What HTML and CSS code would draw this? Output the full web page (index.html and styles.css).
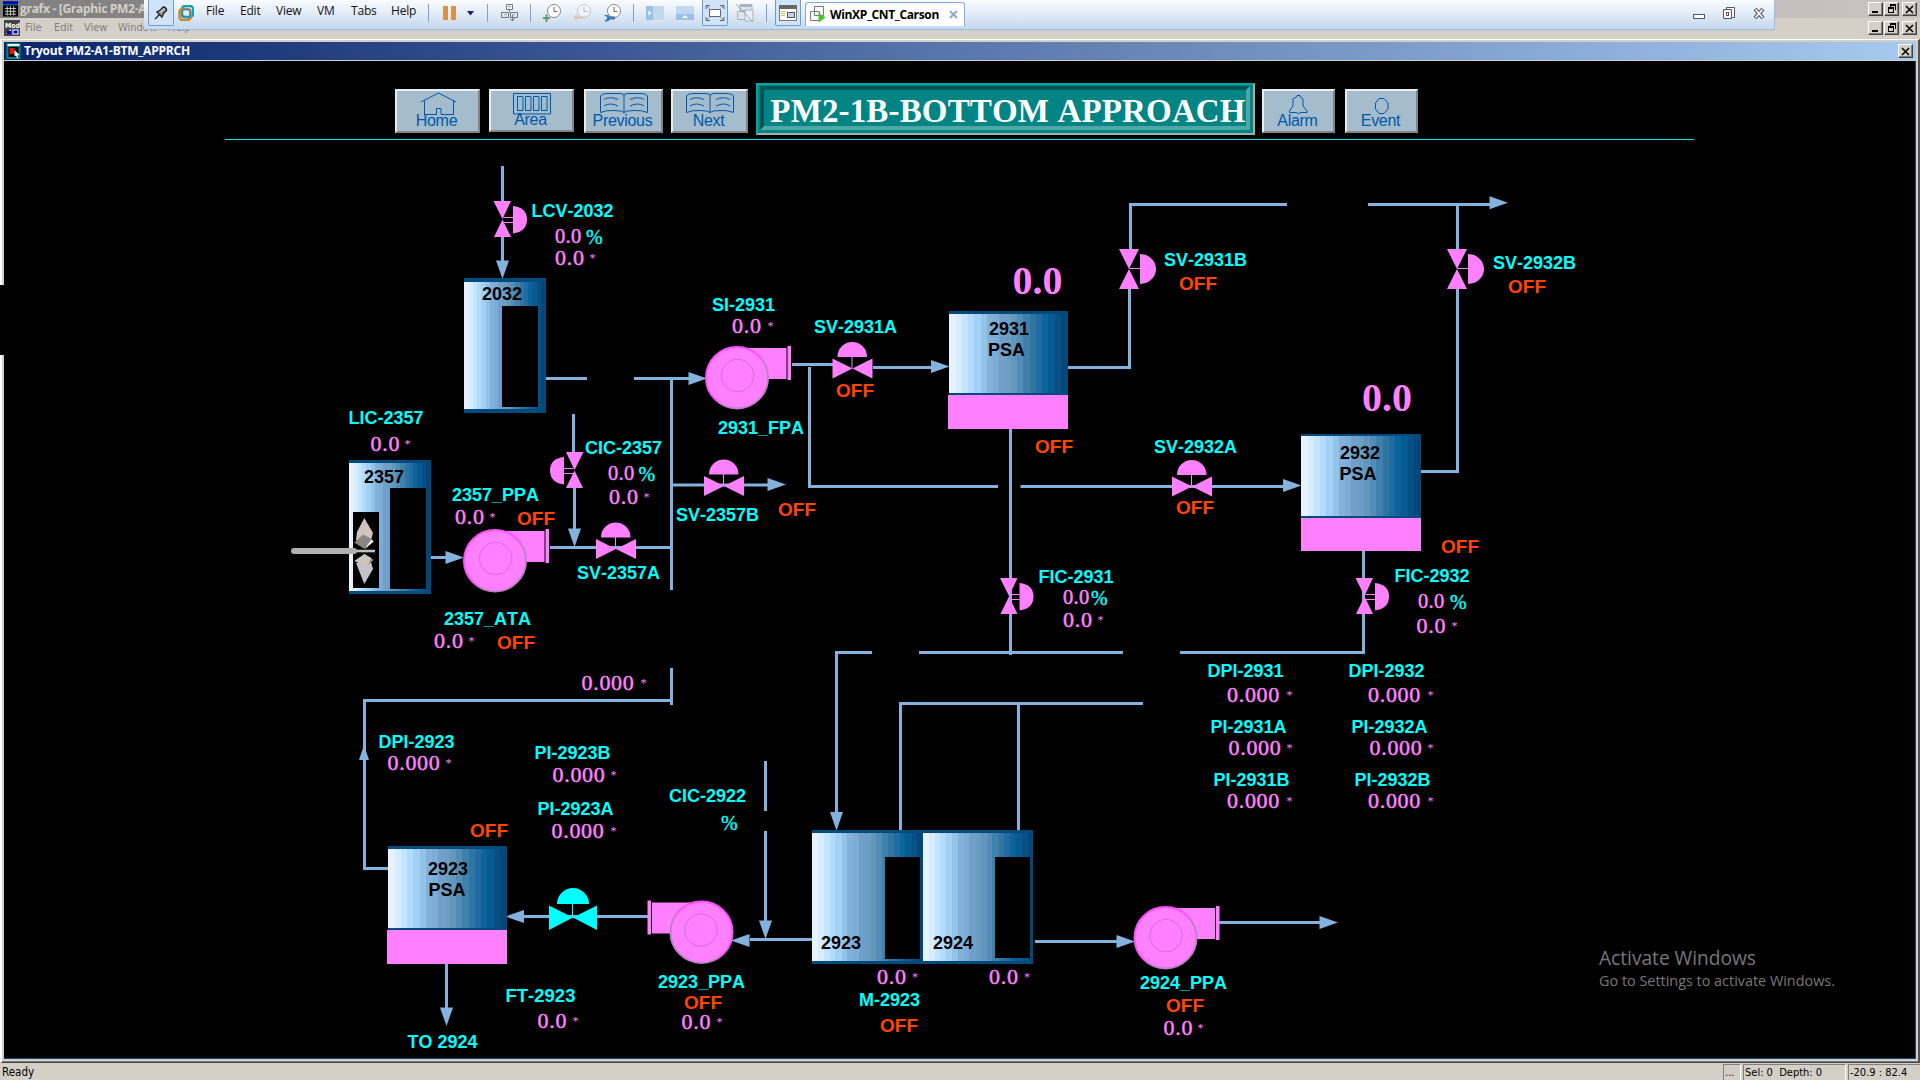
FILE: index.html
```html
<!DOCTYPE html>
<html lang="en">
<head>
<meta charset="utf-8">
<title>grafx - [Graphic PM2-A1]</title>
<link rel="stylesheet" href="styles.css">
</head>
<body>
<div class="app">
  <div class="app-title">
    <svg class="ico16" viewBox="0 0 16 16"><rect width="16" height="16" fill="#000"/><rect y="0" width="16" height="3" fill="#0000c8"/><rect x="0" y="3" width="16" height="1" fill="#0aa"/><path d="M2 7.500h12M2 10.500h12M2 13.500h12M4.500 5v10M8 5v10M11.500 5v10" stroke="#ccc"/></svg>
    <span class="app-name">grafx - [Graphic PM2-A1]</span>
    <div class="winbtns"><i class="wb wb-min"></i><i class="wb wb-res"><b></b></i><i class="wb wb-x gap"><svg width="9" height="9"><path d="M1 1L8 8M8 1L1 8"/></svg></i></div>
  </div>
  <div class="app-menu">
    <svg class="mod" viewBox="0 0 16 16"><rect width="16" height="16" fill="#444"/><text x="1" y="7.500" class="mod-t">Mod</text><path d="M2 14l5-5v5z" fill="#dde"/><rect x="3" y="11" width="4" height="3" fill="#00c"/><rect x="9" y="10" width="5" height="4" fill="#00f" stroke="#fff"/></svg>
    <span class="m1">File</span><span class="m2">Edit</span><span class="m3">View</span><span class="m4">Window</span><span class="m5">Help</span>
    <div class="winbtns low"><i class="wb wb-min"></i><i class="wb wb-res"><b></b></i><i class="wb wb-x gap"><svg width="9" height="9"><path d="M1 1L8 8M8 1L1 8"/></svg></i></div>
  </div>

  <div class="child">
    <div class="child-title">
      <svg class="ico14" viewBox="0 0 14 16"><rect width="14" height="16" fill="#088"/><rect x="1" y="1" width="12" height="2" fill="#eee"/><rect x="2" y="4" width="10" height="10" fill="#000"/><rect x="3" y="5" width="5" height="6" fill="#f01010"/><path d="M8 7l5 5-2 .5 1 3-1.500-.5-1-2.500-1.500 1z" fill="#fff"/></svg>
      <span class="child-name">Tryout PM2-A1-BTM_APPRCH</span>
      <i class="wb wb-x"><svg width="9" height="9"><path d="M1 1L8 8M8 1L1 8"/></svg></i>
    </div>
    <div class="canvas">
      <div class="nav">
        <button class="nb home"><svg width="36" height="24"><path d="M1 11L18.500 2L36 11M4.500 9.500V24M33.500 9.500V24M4 23.500H16.500V17.500H21V23.500H34"/></svg><span>Home</span></button>
        <button class="nb area"><svg width="38" height="24"><path d="M.5 2.500h37v20.500H.5zM4.500 5.500h5.500v14h-5.500zM12.500 5.500h5.500v14h-5.500zM20.500 5.500h5.500v14h-5.500zM28.500 5.500h5.500v14h-5.500z"/></svg><span>Area</span></button>
        <button class="nb prev"><svg width="48" height="24"><path d="M24 4V21.500M24 4Q22 2 18 2.500H8Q2 2.500 .5 5V21.500Q6 19 14 19.500Q22 19.500 24 21.500Q26 19.500 34 19.500Q42 19 47.500 21.500V5Q46 2.500 40 2.500H30Q26 2 24 4M4 8.500Q10 5 18 8.500M4 15Q10 11 18 15M30 8.500Q38 5 44 8.500M30 15Q38 11 44 15"/></svg><span>Previous</span></button>
        <button class="nb next"><svg width="48" height="24"><path d="M24 4V21.500M24 4Q22 2 18 2.500H8Q2 2.500 .5 5V21.500Q6 19 14 19.500Q22 19.500 24 21.500Q26 19.500 34 19.500Q42 19 47.500 21.500V5Q46 2.500 40 2.500H30Q26 2 24 4M4 8.500Q10 5 18 8.500M4 15Q10 11 18 15M30 8.500Q38 5 44 8.500M30 15Q38 11 44 15"/></svg><span>Next</span></button>
        <h1 class="plate"><span>PM2-1B-BOTTOM APPROACH</span></h1>
        <button class="nb alarm"><svg width="20" height="24"><path d="M.5 21.500V20L4 15V8L8 5.500V4.500H11V5.500L14 8V15L18 20V21.500H12L9.500 22.500L7 21.500Z"/></svg><span>Alarm</span></button>
        <button class="nb event"><svg width="14" height="24"><path d="M4 7.500H9L13 12V18L9 22.500H4L.5 18V12Z"/></svg><span>Event</span></button>
      </div>
      <div class="rule"></div>

      <svg class="process" width="1911" height="917" viewBox="4 141 1911 917">
        <defs>
          <linearGradient id="steel">
            <stop offset="0" stop-color="#e6f3ff"/><stop offset=".058" stop-color="#e6f3ff"/>
            <stop offset=".058" stop-color="#d5edff"/><stop offset=".109" stop-color="#d5edff"/>
            <stop offset=".109" stop-color="#c3e5ff"/><stop offset=".159" stop-color="#c3e5ff"/>
            <stop offset=".159" stop-color="#b2dcff"/><stop offset=".21" stop-color="#b2dcff"/>
            <stop offset=".21" stop-color="#a3d1f6"/><stop offset=".268" stop-color="#a3d1f6"/>
            <stop offset=".268" stop-color="#92c3e8"/><stop offset=".319" stop-color="#92c3e8"/>
            <stop offset=".319" stop-color="#84b1db"/><stop offset=".37" stop-color="#84b1db"/>
            <stop offset=".37" stop-color="#7badd6"/><stop offset=".42" stop-color="#7badd6"/>
            <stop offset=".42" stop-color="#719fca"/><stop offset=".479" stop-color="#719fca"/>
            <stop offset=".479" stop-color="#6a9fc4"/><stop offset=".529" stop-color="#6a9fc4"/>
            <stop offset=".529" stop-color="#6297bb"/><stop offset=".58" stop-color="#6297bb"/>
            <stop offset=".58" stop-color="#518db6"/><stop offset=".63" stop-color="#518db6"/>
            <stop offset=".63" stop-color="#4080ac"/><stop offset=".689" stop-color="#4080ac"/>
            <stop offset=".689" stop-color="#2e76a0"/><stop offset=".739" stop-color="#2e76a0"/>
            <stop offset=".739" stop-color="#1f6ba6"/><stop offset=".79" stop-color="#1f6ba6"/>
            <stop offset=".79" stop-color="#0f639b"/><stop offset=".84" stop-color="#0f639b"/>
            <stop offset=".84" stop-color="#065b92"/><stop offset=".899" stop-color="#065b92"/>
            <stop offset=".899" stop-color="#0a4f83"/><stop offset=".95" stop-color="#0a4f83"/>
            <stop offset=".95" stop-color="#00487a"/><stop offset="1" stop-color="#00487a"/>
          </linearGradient>
          <linearGradient id="rim" x1="0" y1="0" x2="1" y2="1">
            <stop offset=".52" stop-color="#ff50ff"/><stop offset=".6" stop-color="#c080c8"/>
          </linearGradient>
          <g id="pump">
            <path d="M32 2H81.500V33H50z"/><rect x="82.500" y="0" width="3.500" height="34"/>
            <ellipse cx="32" cy="31.700" rx="31" ry="30.700" stroke="url(#rim)" stroke-width="2"/>
            <circle cx="32.500" cy="29.500" r="16.300" fill="none" stroke="#d070d8"/>
          </g>
          <g id="sv"><path d="M-20-10L0 0L-20 10zM20-10L0 0L20 10zM-15-11.500A14.700 15 0 0 1 14.500-11.500z"/><path d="M-.5-12V0" stroke="#ff80ff"/></g>
          <g id="svv"><path d="M-10-20H10L0 0zM-10 20H10L0 0zM11-15A16 15 0 0 1 11 15z"/><path d="M0-.5H11" stroke="#ff80ff"/></g>
          <g id="cv"><path d="M-9-18.500H8.500L0-.5zM-8.500 17.500H8.500L0 0zM10.500-13.500Q24.500-12 24.500 0T10.500 14z"/><path d="M1-2H10.500M1 3H10.500" stroke="#ff80ff"/></g>
          <path id="arr" d="M0 0L-18.500-6.500V6.500z"/>
        </defs>

        <!-- pipes -->
        <g class="pipe">
          <path d="M502.500 166V201M502.500 237V262M545 378.500H587M634 378.500H690M671.500 380V590M671.500 668V705M573.500 414V453M574.500 487V532M430 557.500H448M550 547.500H670M673 485H768"/>
          <path d="M792 364.500H834M809.500 367V486.500H998M1020.500 486.500H1284M873 367.500H932M1068 367.500H1129.500V288M1130.500 250V204.500H1287M1368 204.500H1490M1457.500 204V250M1457.500 288V471.500H1420"/>
          <path d="M1010.500 429V655M836.500 814V652.500H872M919 652.500H1123M1180 652.500H1363.500V551M900.500 831V703.500H1143M1018.500 704V831"/>
          <path d="M671 700.500H364.500V868.500H388M446.500 964V1008M524 916.500H648M750 939.500H812M765.500 761V811M765.500 831V922M1035 941.500H1117M1218 922.500H1320"/>
        </g>
        <g class="flow">
          <use href="#arr" transform="translate(502.500 279) rotate(90)"/>
          <use href="#arr" x="707" y="378.500"/>
          <use href="#arr" x="464" y="557.500"/>
          <use href="#arr" transform="translate(574.500 547) rotate(90)"/>
          <use href="#arr" x="786" y="484.500"/>
          <use href="#arr" x="949.500" y="366.500"/>
          <use href="#arr" x="1301.500" y="485.500"/>
          <use href="#arr" x="1508" y="202.800"/>
          <use href="#arr" transform="translate(836.500 830.500) rotate(90)"/>
          <path d="M364 745L369 760H359z"/>
          <use href="#arr" transform="translate(505.500 916.500) rotate(180)"/>
          <use href="#arr" transform="translate(446.500 1026) rotate(90)"/>
          <use href="#arr" transform="translate(765.500 939) rotate(90)"/>
          <use href="#arr" x="1338" y="922.500"/>
        </g>

        <!-- vessels -->
        <g class="wall">
          <rect x="464" y="278" width="82" height="135"/><rect x="349" y="460" width="82" height="134"/>
          <rect x="949" y="311" width="119" height="84"/><rect x="1301" y="434" width="120" height="84"/>
          <rect x="388" y="846" width="119" height="84"/><rect x="812" y="830" width="221" height="134"/>
        </g>
        <g fill="url(#steel)">
          <rect x="464" y="282" width="81" height="127"/><rect x="349" y="463" width="81" height="128"/>
          <rect x="949" y="314" width="118" height="79"/><rect x="1301" y="436" width="119" height="80"/>
          <rect x="388" y="849" width="118" height="79"/><rect x="812" y="833" width="111" height="128"/><rect x="923" y="833" width="110" height="128"/>
        </g>
        <g fill="#000">
          <rect x="502" y="306" width="36" height="101"/><rect x="390" y="488" width="36" height="101"/><rect x="353" y="512" width="26" height="76"/>
          <rect x="885" y="857" width="35" height="102"/><rect x="995" y="857" width="35" height="101"/>
        </g>
        <g class="pink">
          <rect x="948" y="395" width="120" height="34"/><rect x="1301" y="518" width="120" height="33"/><rect x="387" y="930" width="120" height="34"/>
        </g>

        <!-- agitator -->
        <path d="M364.300 518L373 533L371 540H356L357 532z" fill="#d0c4c0"/>
        <path d="M370 538L373.800 541.500L365 549z" fill="#f2f1ea"/>
        <path d="M354.300 542.500L363 534.500L371.800 539L364.300 549z" fill="#8a8585"/>
        <path d="M356 563L364.300 584L373 569L371 562z" fill="#c4c4c8"/>
        <path d="M364.300 554L373.800 560L367 566z" fill="#8a8585"/>
        <path d="M354.300 561L364.300 554L371.500 558L367 567z" fill="#d0c4c0"/>
        <path d="M355 551H375" stroke="#c8c0b0" stroke-width="2.500"/><path d="M362 552.500H375" stroke="#124a78"/>
        <path d="M294 551H354" stroke="#b0b0b0" stroke-width="6" stroke-linecap="round"/>

        <!-- equipment -->
        <g class="pink">
          <use href="#pump" x="463" y="529"/><use href="#pump" x="705" y="346"/><use href="#pump" x="1133.500" y="906"/>
          <use href="#pump" transform="translate(733.500 900.500) scale(-1 1)"/>
          <use href="#cv" x="502.500" y="219.500"/><use href="#cv" transform="translate(574.500 470.500) scale(-1 1)"/>
          <use href="#cv" x="1009" y="596.500"/><use href="#cv" x="1364.500" y="596.500"/>
          <use href="#sv" x="616" y="549"/><use href="#sv" x="724" y="486"/><use href="#sv" x="852.500" y="368.500"/><use href="#sv" x="1192" y="486.500"/>
          <use href="#svv" x="1129" y="269"/><use href="#svv" x="1457" y="269"/>
        </g>
        <g fill="#0ff"><path d="M549 905.500L573 917.500L549 930zM597 905.500L573 917.500L597 930zM557 904A16 16 0 0 1 589 904z"/><rect x="572" y="903" width="1" height="14"/></g>
        <g class="flow"><use href="#arr" transform="translate(731 940.500) rotate(180)"/><use href="#arr" x="1135" y="941.500"/></g>

        <!-- tag names -->
        <g class="tag">
          <text x="531.500" y="217">LCV-2032</text><text x="348.500" y="424">LIC-2357</text><text x="452" y="501">2357_PPA</text>
          <text x="585" y="454">CIC-2357</text><text x="577" y="578.500">SV-2357A</text><text x="676" y="521">SV-2357B</text>
          <text x="718" y="434">2931_FPA</text><text x="444" y="625">2357_ATA</text><text x="712" y="311">SI-2931</text>
          <text x="814" y="333">SV-2931A</text><text x="1164" y="266">SV-2931B</text><text x="1493" y="269">SV-2932B</text>
          <text x="1154" y="453">SV-2932A</text><text x="1038.500" y="583">FIC-2931</text><text x="1394.500" y="582">FIC-2932</text>
          <text x="1207.500" y="677">DPI-2931</text><text x="1348.500" y="677">DPI-2932</text>
          <text x="1210.500" y="733">PI-2931A</text><text x="1351.500" y="733">PI-2932A</text>
          <text x="1213.500" y="786">PI-2931B</text><text x="1354.500" y="786">PI-2932B</text>
          <text x="378.500" y="748">DPI-2923</text><text x="534.500" y="759">PI-2923B</text><text x="537.500" y="815">PI-2923A</text>
          <text x="669" y="802">CIC-2922</text><text x="407.500" y="1048">TO 2924</text><text class="tag-l" x="505.500" y="1001.500">FT-2923</text>
          <text x="658" y="988">2923_PPA</text><text x="859" y="1006">M-2923</text><text x="1140" y="989">2924_PPA</text>
        </g>
        <g class="vessel">
          <text x="482" y="300">2032</text><text x="364" y="483">2357</text><text x="989" y="335">2931</text><text x="988" y="356">PSA</text>
          <text x="1340" y="459">2932</text><text x="1339.500" y="480">PSA</text><text x="428" y="875">2923</text><text x="428.500" y="896">PSA</text>
          <text x="821" y="949">2923</text><text x="933" y="949">2924</text>
        </g>
        <g class="off">
          <text x="517" y="525">OFF</text><text x="778" y="516">OFF</text><text x="497" y="649">OFF</text><text x="836" y="397">OFF</text>
          <text x="1035" y="453">OFF</text><text x="1179" y="290">OFF</text><text x="1508" y="293">OFF</text><text x="1176" y="514">OFF</text>
          <text x="1441" y="553">OFF</text><text x="470" y="837">OFF</text><text x="684" y="1009">OFF</text><text x="880" y="1032">OFF</text><text x="1166" y="1012">OFF</text>
        </g>

        <!-- readings -->
        <g class="val small">
          <text x="555" y="243">0.0</text><text x="608" y="480">0.0</text><text x="1063" y="604">0.0</text><text x="1418" y="608">0.0</text>
        </g>
        <g class="pct">
          <text x="586" y="243.500">%</text><text x="638.500" y="481">%</text><text x="1091" y="605">%</text><text x="1450" y="609">%</text><text x="721" y="830">%</text>
        </g>
        <g class="val">
          <text x="555" y="265">0.0<tspan x="589.500" dy="-3">*</tspan></text>
          <text x="370.500" y="451">0.0<tspan x="404.500" dy="-3">*</tspan></text>
          <text x="455" y="524">0.0<tspan x="489.500" dy="-3">*</tspan></text>
          <text x="609" y="504">0.0<tspan x="643.500" dy="-3">*</tspan></text>
          <text x="434" y="648">0.0<tspan x="468.500" dy="-3">*</tspan></text>
          <text x="732" y="333">0.0<tspan x="767.500" dy="-3">*</tspan></text>
          <text x="1063" y="627">0.0<tspan x="1097.500" dy="-3">*</tspan></text>
          <text x="1416.500" y="633">0.0<tspan x="1451.500" dy="-3">*</tspan></text>
          <text x="581.500" y="690">0.000<tspan x="640.500" dy="-3">*</tspan></text>
          <text x="387.500" y="770">0.000<tspan x="445.500" dy="-3">*</tspan></text>
          <text x="552.500" y="782">0.000<tspan x="610.500" dy="-3">*</tspan></text>
          <text x="551.500" y="838">0.000<tspan x="610.500" dy="-3">*</tspan></text>
          <text x="1227" y="702">0.000<tspan x="1286.500" dy="-3">*</tspan></text>
          <text x="1368" y="702">0.000<tspan x="1427.500" dy="-3">*</tspan></text>
          <text x="1228.500" y="755">0.000<tspan x="1286.500" dy="-3">*</tspan></text>
          <text x="1369.500" y="755">0.000<tspan x="1427.500" dy="-3">*</tspan></text>
          <text x="1227" y="808">0.000<tspan x="1286.500" dy="-3">*</tspan></text>
          <text x="1368" y="808">0.000<tspan x="1427.500" dy="-3">*</tspan></text>
          <text x="537.500" y="1028">0.0<tspan x="572.500" dy="-3">*</tspan></text>
          <text x="681.500" y="1029">0.0<tspan x="716.500" dy="-3">*</tspan></text>
          <text x="877" y="984">0.0<tspan x="912" dy="-3">*</tspan></text>
          <text x="989" y="984">0.0<tspan x="1024" dy="-3">*</tspan></text>
          <text x="1163.500" y="1035">0.0<tspan x="1197.500" dy="-3">*</tspan></text>
        </g>
        <g class="big"><text x="1012.500" y="294">0.0</text><text x="1362" y="411">0.0</text></g>

        <g class="activate">
          <text class="a1" x="1599" y="965" textLength="157" lengthAdjust="spacingAndGlyphs">Activate Windows</text>
          <text class="a2" x="1599" y="986" textLength="236" lengthAdjust="spacingAndGlyphs">Go to Settings to activate Windows.</text>
        </g>
      </svg>
    </div>
  </div>

  <div class="status">
    <span class="ready">Ready</span>
    <span class="cell c1">...</span><span class="cell c2">Sel: 0&nbsp; Depth: 0</span><span class="cell c3">-20.9 : 82.4</span>
  </div>

  <div class="notch"></div>

  <div class="vmbar">
    <div class="vbtn pin"><svg width="14" height="14"><path d="M1 13L6 8" stroke="#222" stroke-width="1.300"/><path d="M3 6L8 11L9.500 7.500L12.500 4.500L12.500 3L10.500 1L9 1.200L6.500 4z" fill="#999" stroke="#222" stroke-width="1.400"/><path d="M6 6.500L10 2.500" stroke="#fff"/></svg></div>
    <svg class="vmw" width="16" height="16"><rect x="4" y="1" width="11" height="11" rx="3" fill="none" stroke="#17a0b8" stroke-width="2.500"/><rect x="1.500" y="4" width="11" height="11" rx="3" fill="none" stroke="#c88a20" stroke-width="2.500"/><rect x="4" y="4.500" width="8" height="8" rx="2" fill="none" stroke="#3a87c8" stroke-width="1.500"/></svg>
    <nav class="vmenu"><span class="v1">File</span><span class="v2">Edit</span><span class="v3">View</span><span class="v4">VM</span><span class="v5">Tabs</span><span class="v6">Help</span></nav>
    <i class="sep"></i>
    <svg class="pause" width="13" height="14"><path d="M0 0h5v14H0zM8 0h5v14H8z" fill="#d6934a"/></svg>
    <svg class="caret" width="7" height="5"><path d="M0 0H7L3.500 4.500z" fill="#15198a"/></svg>
    <i class="sep s2"></i>
    <svg class="send" width="17" height="18"><path d="M5.500.5h6v5h-6zM.5 8.500h7v5h-7zM9.500 8.500h7v5h-7zM8.500 5.500v3M11.500 11v6M9 14.500l2.500 2.500 2.500-2.500" fill="none" stroke="#777"/><path d="M7 2.500h3M3 10.500h3M11 10.500h3" stroke="#8ab0d8"/></svg>
    <i class="sep s3"></i>
    <svg class="t18" viewBox="0 0 18 18"><circle cx="11" cy="7" r="6.500" fill="#fff" stroke="#888"/><path d="M11 3v4.500h3.500" fill="none" stroke="#666"/><path d="M0 14h7M3.500 10.500V18" stroke="#5f9a78" stroke-width="2"/></svg>
    <svg class="t18 dim" viewBox="0 0 18 18"><circle cx="11" cy="7" r="6.500" fill="#fff" stroke="#888"/><path d="M11 3v4.500h3.500" fill="none" stroke="#666"/><path d="M0 13.500l4-4v2.500h6v3H4v2.500z" fill="#e0a070"/></svg>
    <svg class="t18" viewBox="0 0 18 18"><circle cx="11" cy="7" r="6.500" fill="#fff" stroke="#888"/><path d="M11 3v4.500h3.500" fill="none" stroke="#666"/><path d="M1 11L4 13V15L1 17Q5 18.500 7 15.500H12V12.500H7Q5 10 1 11z" fill="#3c78b4"/></svg>
    <i class="sep s3"></i>
    <svg class="t18" viewBox="0 0 18 18"><rect y="2" width="18" height="14" fill="#c3d7ee"/><rect y="2" width="7" height="14" fill="#9cc0e2"/><path d="M2.500 6.500l3 2.500-3 2.500z" fill="#fff"/></svg>
    <svg class="t18" viewBox="0 0 18 18"><rect y="2" width="18" height="14" fill="#c3d7ee"/><rect y="10" width="18" height="6" fill="#9cc0e2"/><path d="M6 14l3-3 3 3z" fill="#fff"/></svg>
    <div class="vbtn fs"><svg width="20" height="18"><path d="M4.500 5.500h11v7h-11z" fill="#fff" stroke="#666"/><path d="M1 5V1.500H5M15 1.500H19V5M1 13V16.500H5M15 16.500H19V13M1.500 2L4 4.500M18.500 2L16 4.500M1.500 16L4 13.500M18.500 16L16 13.500" fill="none" stroke="#666"/></svg></div>
    <svg class="t18 unity" viewBox="0 0 18 18"><path d="M4 .5h12v6H4zM1.500 7.500h9v8h-9z" fill="#dde6f0" stroke="#aab4c0"/><path d="M9 6h8v11H9z" fill="#e8eef6" stroke="#aab4c0"/><path d="M4 1h12v2H4z" fill="#aab4c0"/><path d="M0 0L17 18" stroke="#9aa4b0"/></svg>
    <i class="sep s3"></i>
    <div class="vbtn lib"><svg width="18" height="16"><rect x=".5" y=".5" width="17" height="15" fill="#fff" stroke="#777"/><rect width="18" height="4" fill="#666"/><path d="M2 6.500h5M2 8.500h4M2 10.500h4" stroke="#e0c070"/><rect x="8.500" y="7.500" width="7" height="5" fill="#bcd4ee" stroke="#555"/></svg></div>
    <div class="tab"><svg width="16" height="17"><path d="M4.500.5h9v9h-9zM.5 5.500h9v9h-9z" fill="none" stroke="#777"/><path d="M8.500 7L15.500 11.500L8.500 16.500z" fill="#4cc02c"/></svg><span>WinXP_CNT_Carson</span><svg class="tx" width="9" height="9"><path d="M1 1L8 8M8 1L1 8" stroke="#8aabcb" stroke-width="2"/></svg></div>
    <div class="vwin">
      <svg width="12" height="18"><rect x=".5" y="11.500" width="11" height="4" fill="#fff" stroke="#556"/></svg>
      <svg width="12" height="18"><path d="M3.500 4.500h8v10h-8z" fill="#fff" stroke="#556"/><path d="M.5 6.500h8v9h-8z" fill="#fff" stroke="#556"/><rect x="3.500" y="9.500" width="2" height="3" fill="none" stroke="#556"/></svg>
      <svg width="12" height="18"><path d="M2 6L10 15M10 6L2 15" stroke="#556" stroke-width="4"/><path d="M2.500 6.500L9.500 14.500M9.500 6.500L2.500 14.500" stroke="#fff" stroke-width="1.800"/></svg>
    </div>
  </div>
</div>
</body>
</html>
```
FILE: styles.css
```css
* { box-sizing: border-box; }
body { margin: 0; background: #d4d0c8; font-family: "DejaVu Sans Condensed", "DejaVu Sans", sans-serif; font-size: 11px; overflow: hidden; }
.app { position: relative; display: flex; flex-direction: column; width: 1920px; height: 1080px; background: #d4d0c8; overflow: hidden; }
i { font-style: normal; }

/* application frame */
.app-title { flex: none; display: flex; height: 18px; padding-left: 3px; background: linear-gradient(90deg, #808080, #c8c4c4); }
.ico16 { width: 15px; height: 16px; margin-top: 1px; }
.app-name { margin-left: 2px; font: bold 12px/17px "Open Sans", sans-serif; letter-spacing: -.3px; color: #d4d0c8; white-space: nowrap; }
.winbtns { display: flex; margin: 2px 3px 0 auto; gap: 1px; }
.winbtns.low { margin-top: 3px; }
.wb { position: relative; flex: none; width: 15px; height: 14px; background: #d4d0c8; border: 1px solid; border-color: #fff #404040 #404040 #fff; box-shadow: inset -1px -1px #808080; }
.wb.gap { margin-left: 2px; }
.wb-x { display: flex; align-items: center; justify-content: center; padding-right: 1px; }
.wb-x path { stroke: #000; stroke-width: 1.6; }
.wb-min { background: linear-gradient(#000, #000) 3px 8px / 6px 2px no-repeat #d4d0c8; }
.wb-res b { display: block; width: 6px; height: 6px; margin: 4px 0 0 3px; border: 1px solid #000; border-top-width: 2px; box-shadow: 2px -2px 0 -1px #d4d0c8, 2px -3px 0 0 #000; background: #d4d0c8; }
.app-menu { flex: none; display: flex; height: 21px; padding-left: 4px; color: #808080; line-height: 20px; }
.mod { width: 16px; height: 16px; margin-top: 2px; }
.mod-t { font: bold 7px "DejaVu Sans Condensed", sans-serif; fill: #fff; }
.app-menu span { flex: none; }
.m1 { width: 29px; margin-left: 5px; }
.m2 { width: 30px; }
.m3 { width: 34px; }
.m4 { width: 50px; }

/* graphic window */
.child { flex: none; height: 1024px; padding: 2px 2px 3px 2px; border-left: 2px solid #fff; border-top: 1px solid #fff; border-bottom: 1px solid #404040; border-right: 2px solid #55504a; box-shadow: inset 0 -1px #808080; }
.child-title { display: flex; align-items: center; height: 18px; padding: 0 3px 0 2px; background: linear-gradient(90deg, #0a246a, #a6caf0); }
.ico14 { width: 15px; height: 16px; }
.child-name { margin-left: 3px; font: bold 12px/18px "Open Sans", sans-serif; letter-spacing: -.2px; color: #fff; }
.child-title .wb { margin-left: auto; }
.canvas { width: 1912px; height: 998px; margin-top: 1px; background: #000; border-right: 1px solid #004a80; border-bottom: 1px solid #004a80; display: flex; flex-direction: column; }

/* navigation header */
.nav { flex: none; display: flex; align-items: flex-start; height: 78px; padding: 22px 0 0 391px; }
.nb { display: flex; flex-direction: column; align-items: center; height: 44px; margin: 6px 0 0; padding: 0; background: #a4bccc; border: 2px solid; border-color: #ececec #848484 #848484 #ececec; font: 16px/16px "Liberation Sans", Arial, sans-serif; color: #0058a8; letter-spacing: -.3px; }
.nb svg { flex: none; margin-bottom: -2px; fill: none; stroke: #0058a8; }
.nb span { padding-right: 2px; }
.home { width: 85px; }
.area { width: 85px; height: 43px; margin-left: 9px; }
.area span { margin-top: -1px; }
.prev { width: 79px; margin-left: 10px; }
.next { width: 77px; margin-left: 8px; }
.alarm { width: 73px; margin-left: 7px; }
.event { width: 73px; margin-left: 10px; }
.plate { width: 499px; height: 52px; margin: 0 0 0 8px; padding: 1px 3px 3px 2px; background: #008484; border: 2px solid; border-color: #00a6a6 #a3adad #a3adad #00a6a6; }
.plate span { display: block; height: 44px; padding-left: 6px; border: 4px solid; border-color: #005656 #50a6a6 #50a6a6 #005656; text-align: center; font: bold 33px/43px "Liberation Serif", "Times New Roman", serif; letter-spacing: .15px; font-kerning: none; color: #fff; white-space: nowrap; }
.rule { flex: none; height: 1px; width: 1469px; margin: 0 0 1px 221px; background: #00e8e8; }

/* process diagram */
.process { display: block; flex: none; font-kerning: none; }
.pipe { fill: none; stroke: #84b2de; stroke-width: 3; }
.flow { fill: #84b2de; }
.wall { fill: #004a7c; }
.pink { fill: #ff80ff; }
.tag, .vessel { font: bold 18px "Liberation Sans", Arial, sans-serif; font-kerning: none; fill: #0ff; }
.tag-l { font-size: 18.5px; }
.vessel { fill: #000; }
.off { font: bold 19px "Liberation Sans", Arial, sans-serif; fill: #ff4500; }
.val { font: 22px "Liberation Serif", "Times New Roman", serif; letter-spacing: .7px; fill: #ff80ff; stroke: #ff80ff; stroke-width: .5px; }
.val.small { font-size: 20.5px; letter-spacing: .3px; }
.val tspan { font-size: 12px; stroke-width: 0; }
.pct { font: 20px "Liberation Serif", "Times New Roman", serif; fill: #0ff; stroke: #0ff; stroke-width: .4px; }
.big { font: bold 40px "Liberation Serif", "Times New Roman", serif; fill: #ff80ff; }
.activate { font-family: "Open Sans", "Noto Sans", sans-serif; fill: #787878; }
.a1 { font-size: 19.5px; }
.a2 { font-size: 14.5px; }

/* status bar */
.status { flex: none; display: flex; align-items: flex-start; height: 17px; padding-top: 1px; line-height: 16px; font-size: 11px; color: #000; overflow: hidden; }
.ready { flex: none; width: 1721px; margin-left: 2px; font-size: 11.5px; }
.cell { flex: none; height: 16px; padding-left: 1px; border-left: 1px solid #808080; border-top: 1px solid #808080; border-right: 1px solid #fff; white-space: nowrap; overflow: hidden; line-height: 15px; }
.c1 { width: 18px; }
.c2 { width: 103px; margin-left: 2px; }
.c3 { width: 73px; margin-left: 2px; }
.notch { position: absolute; left: 0; top: 285px; width: 4px; height: 70px; background: #000; }

/* virtual machine toolbar floating over the guest */
.vmbar { position: absolute; left: 144px; top: 0; width: 1631px; height: 30px; display: flex; align-items: flex-start; padding: 0 9px 0 4px; background: linear-gradient(#fafcff, #e6eef8 40%, #c4d8ee); border-bottom: 1px solid #9dbbe4; border-right: 1px solid #9dbbe4; }
.vmbar > * { flex: none; }
.vbtn { height: 26px; display: flex; align-items: center; justify-content: center; background: #cfe4fb; border: 1px solid #6f9bcd; border-top: 0; border-radius: 0 0 2px 2px; }
.pin { width: 26px; }
.vmw { margin: 5px 0 0 4px; }
.vmenu { display: flex; margin-left: 12px; font: 12px/22px "Open Sans", "Noto Sans", sans-serif; color: #111; letter-spacing: -.2px; }
.v1 { width: 34px; } .v2 { width: 36px; } .v3 { width: 41px; } .v4 { width: 34px; } .v5 { width: 40px; } .v6 { width: 37px; }
.sep { width: 1px; height: 18px; margin-top: 4px; background: #7ba0cc; }
.pause { margin: 6px 0 0 14px; }
.caret { margin: 11px 0 0 11px; }
.s2 { margin-left: 13px; }
.send { margin: 4px 0 0 13px; }
.s3 { margin-left: 12px; }
.t18 { width: 18px; height: 18px; margin: 4px 0 0 12px; }
.dim { opacity: .4; }
.fs { width: 26px; margin-left: 8px; }
.unity { margin-left: 8px; }
.lib { width: 26px; margin-left: 8px; }
.tab { display: flex; align-items: center; width: 160px; height: 24px; margin: 2px 0 0 4px; padding-left: 4px; background: #fff; border: 1px solid #84a9d4; border-bottom: 0; border-radius: 3px 3px 0 0; }
.tab span { width: 115px; margin-left: 4px; font: bold 12px/22px "Open Sans", sans-serif; letter-spacing: -.35px; color: #000; white-space: nowrap; }
.tx { margin-left: 4px; }
.vwin { display: flex; gap: 18px; margin: 3px 0 0 auto; }
```
